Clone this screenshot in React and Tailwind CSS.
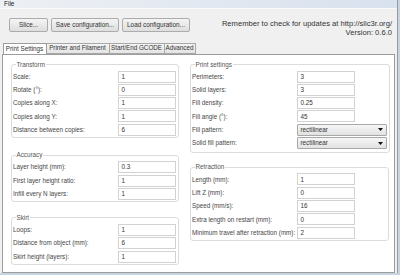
const transform = [
  ["Scale:", "1"],
  ["Rotate (°):", "0"],
  ["Copies along X:", "1"],
  ["Copies along Y:", "1"],
  ["Distance between copies:", "6"],
];

const accuracy = [
  ["Layer height (mm):", "0.3"],
  ["First layer height ratio:", "1"],
  ["Infill every N layers:", "1"],
];

const skirt = [
  ["Loops:", "1"],
  ["Distance from object (mm):", "6"],
  ["Skirt height (layers):", "1"],
];

const printSettings = [
  ["Perimeters:", "3"],
  ["Solid layers:", "3"],
  ["Fill density:", "0.25"],
  ["Fill angle (°):", "45"],
  ["Fill pattern:", "rectilinear", true],
  ["Solid fill pattern:", "rectilinear", true],
];

const retraction = [
  ["Length (mm):", "1"],
  ["Lift Z (mm):", "0"],
  ["Speed (mm/s):", "16"],
  ["Extra length on restart (mm):", "0"],
  ["Minimum travel after retraction (mm):", "2"],
];

function Row({ label, value, select }) {
  return (
    <div className="flex items-center h-[12px]">
      <span className="w-[105px] whitespace-nowrap text-[#464646]">{label}</span>
      {select ? (
        <div className="w-[90px] h-[12px] flex items-center justify-between border border-[#a8a8a8] rounded-[1px] bg-gradient-to-b from-[#f6f6f6] to-[#e2e2e2] pl-[2.5px] pr-[3px] text-[#333]">
          <span>{value}</span>
          <svg width="5" height="3" viewBox="0 0 5 3">
            <path d="M0 0h5L2.5 3z" fill="#111" />
          </svg>
        </div>
      ) : (
        <div className="w-[58px] h-[12px] flex items-center border border-[#d2d2d2] bg-white pl-[2.5px] text-[#333]">
          {value}
        </div>
      )}
    </div>
  );
}

function Group({ title, rows, className }) {
  return (
    <fieldset className={"border border-[#dcdcdc] rounded-[3px] pl-[1px] pr-[1.5px] pt-[2px] " + className}>
      <legend className="ml-[2.5px] px-[1px] leading-[8px] text-[#555]">{title}</legend>
      <div className="flex flex-col gap-[1.33px]">
        {rows.map(([l, v, s]) => (
          <Row key={l} label={l} value={v} select={s} />
        ))}
      </div>
    </fieldset>
  );
}

export default function App() {
  return (
    <div className="w-[400px] h-[275px] bg-[#c9d4e3] overflow-hidden font-['Liberation_Sans',Arial,sans-serif] text-[6.3px]">
      <div className="w-[398px] h-[273px] bg-[#f0f0f0] border-r border-[#9a9a9a] flex flex-col">
        {/* menu */}
        <div className="h-[9px] shrink-0 flex items-center pl-[4px] bg-gradient-to-r from-[#edf0f4] to-[#d8e1ee] border-b border-[#f8f9fb] text-[6.5px] text-[#222]">
          File
        </div>

        {/* toolbar */}
        <div className="h-[33.5px] shrink-0 flex justify-between items-start">
          <div className="flex gap-[3px] pl-[9px] pt-[9.3px] text-[6.4px] text-[#333]">
            {[
              ["Slice...", "w-[39px]"],
              ["Save configuration...", "w-[68px]"],
              ["Load configuration...", "w-[68px]"],
            ].map(([t, w]) => (
              <div
                key={t}
                className={w + " h-[13.4px] flex items-center justify-center border border-[#acacac] rounded-[2px] bg-gradient-to-b from-[#f4f4f4] to-[#dedede]"}
              >
                {t}
              </div>
            ))}
          </div>
          <div className="pr-[5px] pt-[9.8px] text-right text-[7.6px] leading-[9px] text-[#333]">
            <p>Remember to check for updates at http://slic3r.org/</p>
            <p>Version: 0.6.0</p>
          </div>
        </div>

        {/* tabs */}
        <div className="flex h-[11px] pl-[2.5px] shrink-0 relative z-10">
          <div className="w-[44px] h-[11.5px] flex items-center justify-center bg-white border border-b-0 border-[#9c9c9c] text-[#333]">
            Print Settings
          </div>
          {[
            ["Printer and Filament", "w-[63px]"],
            ["Start/End GCODE", "w-[55px]"],
            ["Advanced", "w-[31px]"],
          ].map(([t, w]) => (
            <div
              key={t}
              className={w + " h-[11px] flex items-center justify-center border border-l-0 border-[#a8a8a8] bg-gradient-to-b from-[#f4f4f4] to-[#e4e4e4] text-[#333]"}
            >
              {t}
            </div>
          ))}
        </div>

        {/* panel */}
        <div className="ml-[2px] w-[393px] flex-1 bg-white border border-[#9c9c9c] flex">
          <div className="ml-[8px] w-[167px] flex flex-col">
            <Group title="Transform" rows={transform} className="mt-[6px] pb-[1px]" />
            <Group title="Accuracy" rows={accuracy} className="mt-[13.4px] pb-[1px]" />
            <Group title="Skirt" rows={skirt} className="mt-[12px] pb-[1px]" />
          </div>
          <div className="ml-[12px] w-[199px] flex flex-col">
            <Group title="Print settings" rows={printSettings} className="mt-[6px] pb-[3px]" />
            <Group title="Retraction" rows={retraction} className="mt-[10.3px] pb-[1.5px]" />
          </div>
        </div>
      </div>
    </div>
  );
}
